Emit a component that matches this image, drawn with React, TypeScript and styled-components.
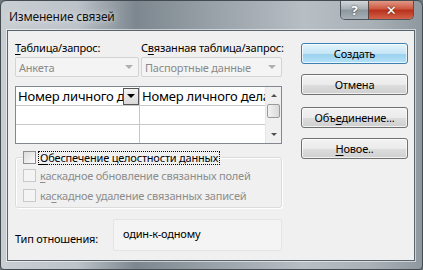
import React from 'react';
import styled, { createGlobalStyle } from 'styled-components';

const GlobalStyle = createGlobalStyle`
  html, body {
    margin: 0;
    padding: 0;
    background: #6d777e;
  }
  body {
    font-family: "Noto Sans", "DejaVu Sans", sans-serif;
    font-size: 11px;
    letter-spacing: -0.2px;
    color: #000;
  }
`;

const Window = styled.div`
  width: 423px;
  height: 270px;
  box-sizing: border-box;
  border: 1px solid #434b51;
  border-radius: 6px 6px 4px 4px;
  background:
    linear-gradient(90deg, #c9ced3 0%, #bcc3c9 18%, #7d878f 32%, #98a1a8 50%, #b7bec4 72%, #a9b1b7 88%, #8f989f 100%);
  display: flex;
  flex-direction: column;
  padding: 0 7px 8px 6px;
  overflow: hidden;
`;

const TitleBar = styled.div`
  height: 29px;
  display: flex;
  align-items: flex-start;
  justify-content: space-between;
`;

const Title = styled.div`
  padding: 7px 0 0 2px;
  font-size: 12px;
  color: #111;
  text-shadow: 0 0 6px rgba(255, 255, 255, 0.9);
`;

const CaptionButtons = styled.div`
  display: flex;
  margin-top: -1px;
  margin-right: 1px;
  border: 1px solid #4c555b;
  border-top: none;
  border-radius: 0 0 5px 5px;
  overflow: hidden;
  height: 19px;
`;

const CaptionButton = styled.div<{ $close?: boolean }>`
  width: ${(p) => (p.$close ? 44 : 27)}px;
  display: flex;
  align-items: center;
  justify-content: center;
  color: #fff;
  font-weight: bold;
  font-size: 13px;
  background: ${(p) =>
    p.$close
      ? 'linear-gradient(180deg, #e3a08f 0%, #cf5a44 45%, #b8321d 55%, #d4624a 100%)'
      : 'linear-gradient(180deg, #d6dbdf 0%, #aab2b8 45%, #8d979e 55%, #a7b0b6 100%)'};
  border-left: ${(p) => (p.$close ? '1px solid #5a4440' : 'none')};
  text-shadow: 0 0 2px #333;
`;

const Panel = styled.div`
  flex: 1;
  background: #f0f0f0;
  border: 1px solid #58636b;
  box-shadow: 0 0 0 1px rgba(255, 255, 255, 0.55);
  display: flex;
  padding: 9px 0 0 7px;
`;

const LeftColumn = styled.div`
  width: 267px;
  display: flex;
  flex-direction: column;
`;

const TwoCols = styled.div`
  display: grid;
  grid-template-columns: 124px 141px;
  column-gap: 2px;
`;

const Label = styled.div`
  height: 15px;
  line-height: 15px;
  white-space: nowrap;
`;

const Combo = styled.div`
  margin-top: 2px;
  height: 20px;
  box-sizing: border-box;
  border: 1px solid #d4d4d4;
  border-radius: 2px;
  background: #f4f4f4;
  color: #8a8a8a;
  display: flex;
  align-items: center;
  padding-left: 3px;
  white-space: nowrap;
  overflow: hidden;
`;

const ComboText = styled.span`
  flex: 1;
`;

const ComboArrow = styled.span`
  width: 0;
  height: 0;
  border-left: 4px solid transparent;
  border-right: 4px solid transparent;
  border-top: 4px solid #b0b0b0;
  margin-right: 5px;
`;

const Grid = styled.div`
  margin-top: 9px;
  height: 58px;
  box-sizing: border-box;
  border: 1px solid #828790;
  background: #fff;
  display: flex;
`;

const Columns = styled.div`
  flex: 1;
  display: grid;
  grid-template-columns: 124px 1fr;
  grid-auto-rows: 19px;
  overflow: hidden;
`;

const Cell = styled.div<{ $last?: boolean }>`
  border-right: ${(p) => (p.$last ? 'none' : '1px solid #c8c8c8')};
  border-bottom: 1px solid #c8c8c8;
  font-size: 13px;
  line-height: 18px;
  padding-left: 2px;
  white-space: nowrap;
  overflow: hidden;
  display: flex;
  align-items: center;
`;

const CellText = styled.span`
  flex: 1;
  overflow: hidden;
`;

const DropButton = styled.span`
  width: 16px;
  height: 17px;
  box-sizing: border-box;
  border: 1px solid #555;
  background: linear-gradient(180deg, #f4f4f4, #d8d8d8);
  display: flex;
  align-items: center;
  justify-content: center;
  flex: none;
  &::after {
    content: '';
    border-left: 4px solid transparent;
    border-right: 4px solid transparent;
    border-top: 4px solid #000;
  }
`;

const ScrollBar = styled.div`
  width: 15px;
  background: #f0f0f0;
  border-left: 1px solid #e6e6e6;
  display: flex;
  flex-direction: column;
  align-items: center;
`;

const ScrollArrow = styled.div<{ $down?: boolean }>`
  height: 17px;
  width: 100%;
  display: flex;
  align-items: center;
  justify-content: center;
  &::after {
    content: '';
    border-left: 3px solid transparent;
    border-right: 3px solid transparent;
    ${(p) => (p.$down ? 'border-top: 3px solid #505050;' : 'border-bottom: 3px solid #505050;')}
  }
`;

const Thumb = styled.div`
  width: 13px;
  height: 14px;
  box-sizing: border-box;
  border: 1px solid #9a9a9a;
  border-radius: 2px;
  background: linear-gradient(90deg, #f2f2f2, #dadada);
`;

const ScrollTrack = styled.div`
  flex: 1;
`;

const Group = styled.fieldset`
  margin: 7px 0 0;
  padding: 5px 0 5px 7px;
  border: 1px solid #dcdcdc;
  border-radius: 3px;
  box-shadow: inset 1px 1px 0 #fff, 1px 1px 0 #fff;
  display: flex;
  flex-direction: column;
  gap: 7px;
`;

const Legend = styled.legend`
  padding: 0 1px 0 0;
  margin-left: 0;
`;

const CheckRow = styled.div<{ $disabled?: boolean }>`
  display: flex;
  align-items: center;
  gap: 2px;
  height: 13px;
  color: ${(p) => (p.$disabled ? '#8d8d8d' : '#000')};
  white-space: nowrap;
`;

const Box = styled.span<{ $disabled?: boolean }>`
  width: 13px;
  height: 13px;
  box-sizing: border-box;
  border: 1px solid ${(p) => (p.$disabled ? '#c9c9c9' : '#8e8f8f')};
  background: ${(p) =>
    p.$disabled ? '#f4f4f4' : 'linear-gradient(135deg, #dcdcdc, #fbfbfb)'};
  flex: none;
`;

const CheckText = styled.span<{ $focus?: boolean }>`
  padding: 0 1px;
  border: 1px dotted ${(p) => (p.$focus ? '#000' : 'transparent')};
  line-height: 12px;
`;

const RelationRow = styled.div`
  margin-top: 11px;
  display: flex;
  align-items: center;
`;

const RelationLabel = styled.div`
  width: 98px;
  padding-top: 6px;
`;

const RelationValue = styled.div`
  width: 169px;
  height: 32px;
  box-sizing: border-box;
  border: 1px solid #e4e4e4;
  border-radius: 2px;
  background: #f4f4f4;
  padding: 6px 0 0 9px;
`;

const RightColumn = styled.div`
  margin-left: 19px;
  padding-top: 3px;
  display: flex;
  flex-direction: column;
  gap: 10px;
`;

const Button = styled.div<{ $default?: boolean; $spaced?: boolean }>`
  width: 107px;
  height: 21px;
  margin-top: ${(p) => (p.$spaced ? 2 : 0)}px;
  box-sizing: border-box;
  border: 1px solid ${(p) => (p.$default ? '#3c7fb1' : '#707070')};
  border-radius: 3px;
  display: flex;
  align-items: center;
  justify-content: center;
  background: ${(p) =>
    p.$default
      ? 'linear-gradient(180deg, #e5f4fc 0%, #c4e5f6 50%, #98d1ef 51%, #b6e2f7 100%)'
      : 'linear-gradient(180deg, #f2f2f2 0%, #ebebeb 50%, #dddddd 51%, #cfcfcf 100%)'};
  box-shadow: inset 0 0 0 1px rgba(255, 255, 255, 0.7);
`;

const U = styled.span`
  text-decoration: underline;
  text-underline-offset: 2px;
`;

export default function App() {
  return (
    <>
      <GlobalStyle />
      <Window>
        <TitleBar>
          <Title>Изменение связей</Title>
          <CaptionButtons>
            <CaptionButton>?</CaptionButton>
            <CaptionButton $close>✕</CaptionButton>
          </CaptionButtons>
        </TitleBar>
        <Panel>
          <LeftColumn>
            <TwoCols>
              <Label>
                <U>Т</U>аблица/запрос:
              </Label>
              <Label>
                С<U>в</U>язанная таблица/запрос:
              </Label>
              <Combo>
                <ComboText>Анкета</ComboText>
                <ComboArrow />
              </Combo>
              <Combo>
                <ComboText>Паспортные данные</ComboText>
                <ComboArrow />
              </Combo>
            </TwoCols>
            <Grid>
              <Columns>
                <Cell>
                  <CellText>Номер личного дела</CellText>
                  <DropButton />
                </Cell>
                <Cell $last>
                  <CellText>Номер личного дела</CellText>
                </Cell>
                <Cell />
                <Cell $last />
                <Cell />
                <Cell $last />
              </Columns>
              <ScrollBar>
                <ScrollArrow />
                <Thumb />
                <ScrollTrack />
                <ScrollArrow $down />
              </ScrollBar>
            </Grid>
            <Group>
              <Legend>
                <CheckRow>
                  <Box />
                  <CheckText $focus>
                    <U>О</U>беспечение целостности данных
                  </CheckText>
                </CheckRow>
              </Legend>
              <CheckRow $disabled>
                <Box $disabled />
                <CheckText>
                  <U>к</U>аскадное обновление связанных полей
                </CheckText>
              </CheckRow>
              <CheckRow $disabled>
                <Box $disabled />
                <CheckText>
                  ка<U>с</U>кадное удаление связанных записей
                </CheckText>
              </CheckRow>
            </Group>
            <RelationRow>
              <RelationLabel>Тип отношения:</RelationLabel>
              <RelationValue>один-к-одному</RelationValue>
            </RelationRow>
          </LeftColumn>
          <RightColumn>
            <Button $default>Создать</Button>
            <Button>Отмена</Button>
            <Button $spaced>
              Объ<U>е</U>динение...
            </Button>
            <Button>
              <U>Н</U>овое..
            </Button>
          </RightColumn>
        </Panel>
      </Window>
    </>
  );
}
